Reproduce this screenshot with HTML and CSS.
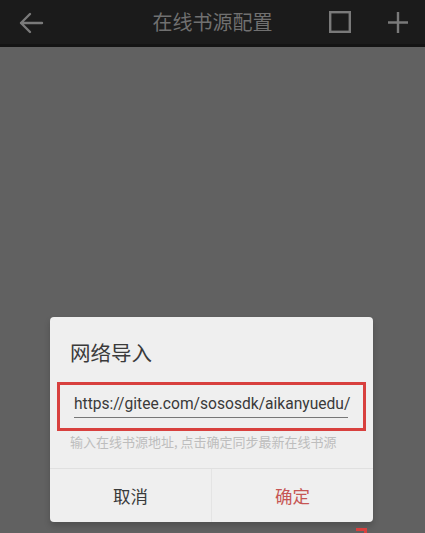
FILE: index.html
```html
<!DOCTYPE html>
<html lang="zh">
<head>
<meta charset="utf-8">
<link rel="stylesheet" href="styles.css">
</head>
<body>
<div class="screen">
  <header class="topbar">
    <div class="side left">
      <span class="icon back">
        <svg width="26" height="22" viewBox="0 0 26 22"><path d="M24 11H3M12 2L3 11l9 9" fill="none" stroke="#7a7a7a" stroke-width="2.4" stroke-linecap="round" stroke-linejoin="round"/></svg>
      </span>
    </div>
    <h1 class="title">在线书源配置</h1>
    <div class="side right">
      <span class="icon square">
        <svg width="22" height="22" viewBox="0 0 22 22"><rect x="1.2" y="1.2" width="19.6" height="19.6" fill="none" stroke="#7a7a7a" stroke-width="2.4"/></svg>
      </span>
      <span class="icon plus">
        <svg width="20" height="21" viewBox="0 0 20 21"><path d="M10 0v21M0 10.5h20" fill="none" stroke="#7a7a7a" stroke-width="2.4"/></svg>
      </span>
    </div>
  </header>
  <main class="backdrop">
    <section class="dialog">
      <h2 class="dlg-title">网络导入</h2>
      <div class="highlight">
        <div class="field">https://gitee.com/sososdk/aikanyuedu/</div>
      </div>
      <p class="hint">输入在线书源地址, 点击确定同步最新在线书源</p>
      <div class="actions">
        <button class="btn cancel">取消</button>
        <button class="btn ok">确定</button>
      </div>
    </section>
    <span class="corner-mark"></span>
  </main>
</div>
</body>
</html>
```
FILE: styles.css
```css
html, body {
  margin: 0;
  padding: 0;
  width: 425px;
  height: 533px;
  overflow: hidden;
  font-family: "Noto Sans CJK SC", Roboto, sans-serif;
}
.screen {
  width: 425px;
  height: 533px;
  display: flex;
  flex-direction: column;
  background: #616161;
}
.topbar {
  height: 44px;
  flex: 0 0 44px;
  background: #1b1b1b;
  border-bottom: 3px solid #141414;
  display: grid;
  grid-template-columns: 1fr auto 1fr;
  align-items: center;
  padding: 0 17px;
}
.side {
  display: flex;
  align-items: center;
}
.right {
  justify-content: flex-end;
}
.icon {
  display: flex;
  align-items: center;
}
.back {
  margin-left: 1px;
  margin-top: 1px;
}
.title {
  margin: 0;
  text-align: center;
  font-size: 20px;
  font-weight: 400;
  color: #707070;
  line-height: 44px;
}
.square {
  margin-right: 37px;
}
.plus {
  margin-top: 1px;
}
.backdrop {
  flex: 1;
  position: relative;
  padding-top: 270px;
}
.dialog {
  margin-left: 50px;
  width: 323px;
  height: 205px;
  background: #efefef;
  border-radius: 4px;
  box-shadow: 0 4px 6px rgba(0, 0, 0, 0.18);
  display: flex;
  flex-direction: column;
  box-sizing: border-box;
}
.dlg-title {
  margin: 0;
  padding: 22px 0 0 20px;
  font-size: 20.5px;
  font-weight: 400;
  line-height: 27px;
  color: #3a3a3a;
}
.highlight {
  margin: 16px 7px 0 7px;
  height: 49px;
  border: 3px solid #d8403e;
  box-sizing: border-box;
  padding: 0 15px 0 14px;
}
.field {
  margin-top: 8px;
  font-family: Roboto, sans-serif;
  font-size: 15.6px;
  line-height: 22px;
  color: #3a3a3a;
  border-bottom: 1.5px solid #777;
  padding-bottom: 2px;
  white-space: nowrap;
}
.hint {
  margin: 0;
  padding: 2px 0 0 20px;
  font-size: 13px;
  line-height: 18px;
  color: #bdbdbd;
  white-space: nowrap;
}
.actions {
  margin-top: auto;
  height: 53px;
  display: flex;
  border-top: 1px solid #e0e0e0;
}
.btn {
  flex: 1;
  background: none;
  border: 0;
  padding: 0;
  font-family: "Noto Sans CJK SC", sans-serif;
  font-size: 17.5px;
  color: #3a3a3a;
}
.ok {
  color: #c65654;
  border-left: 1px solid #e4e4e4;
}
.corner-mark {
  position: absolute;
  left: 356px;
  top: 481px;
  width: 8px;
  height: 6px;
  border-top: 3px solid #d8403e;
  border-right: 3px solid #d8403e;
}
```
